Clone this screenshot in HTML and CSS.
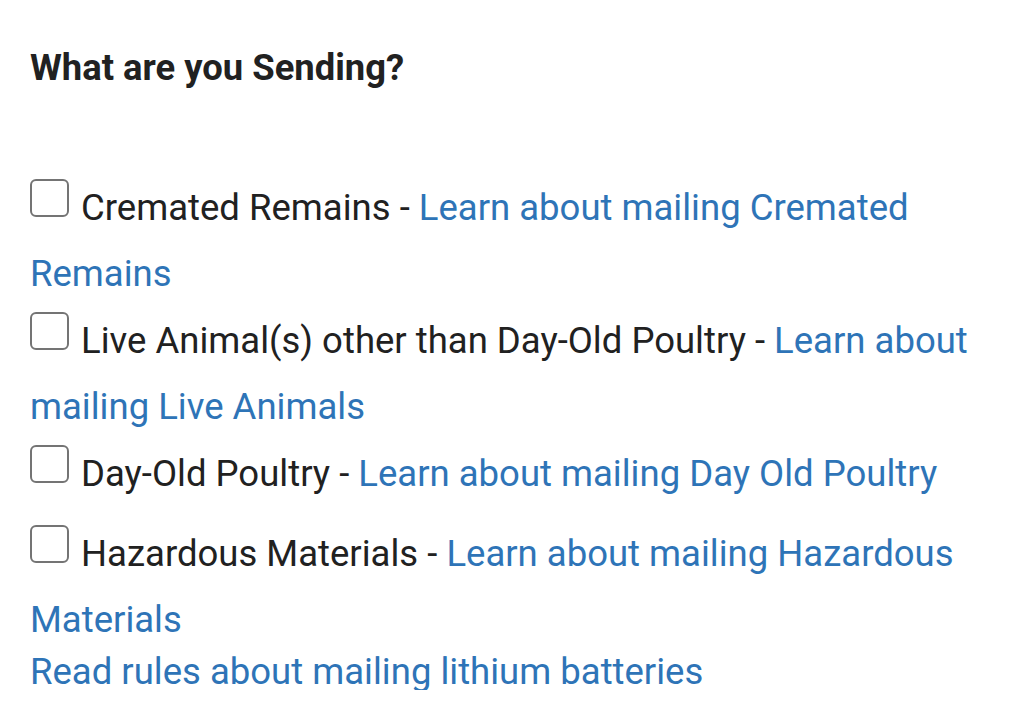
FILE: index.html
```html
<!DOCTYPE html>
<html lang="en">
<head>
<meta charset="utf-8">
<title>What are you Sending?</title>
<link rel="stylesheet" href="styles.css">
</head>
<body>
<main class="page">
  <h2 class="title">What are you Sending?</h2>
  <div class="options">
    <div class="option"><label><span class="box"></span> Cremated Remains - </label><a href="#">Learn about mailing Cremated Remains</a></div>
    <div class="option"><label><span class="box"></span> Live Animal(s) other than Day-Old Poultry - </label><a href="#">Learn about mailing Live Animals</a></div>
    <div class="option option--single"><label><span class="box"></span> Day-Old Poultry - </label><a href="#">Learn about mailing Day Old Poultry</a></div>
    <div class="option"><label><span class="box"></span> Hazardous Materials - </label><a href="#">Learn about mailing Hazardous Materials</a></div>
    <div class="extra"><a href="#">Read rules about mailing lithium batteries</a></div>
  </div>
</main>
</body>
</html>
```

FILE: styles.css
```css
html, body {
  margin: 0;
  padding: 0;
  background: #ffffff;
}
body {
  font-family: Roboto, "Liberation Sans", Arial, sans-serif;
  color: #212121;
}
.page {
  padding: 0 30px;
}
.title {
  margin: 0;
  padding-top: 47px;
  font-size: 36.4px;
  font-weight: 700;
  line-height: 42px;
  color: #212121;
}
.options {
  margin-top: 86px;
  font-size: 36.5px;
  line-height: 66px;
}
.option {
  margin-bottom: 1px;
}
.option--single {
  padding-bottom: 13px;
}
.box {
  display: inline-block;
  width: 35px;
  height: 34px;
  margin-right: 3px;
  border: 2px solid #747474;
  border-radius: 6px;
  box-sizing: content-box;
  vertical-align: 3px;
}
a {
  color: #2e74b7;
  text-decoration: none;
}
.extra {
  line-height: 36px;
}
```
